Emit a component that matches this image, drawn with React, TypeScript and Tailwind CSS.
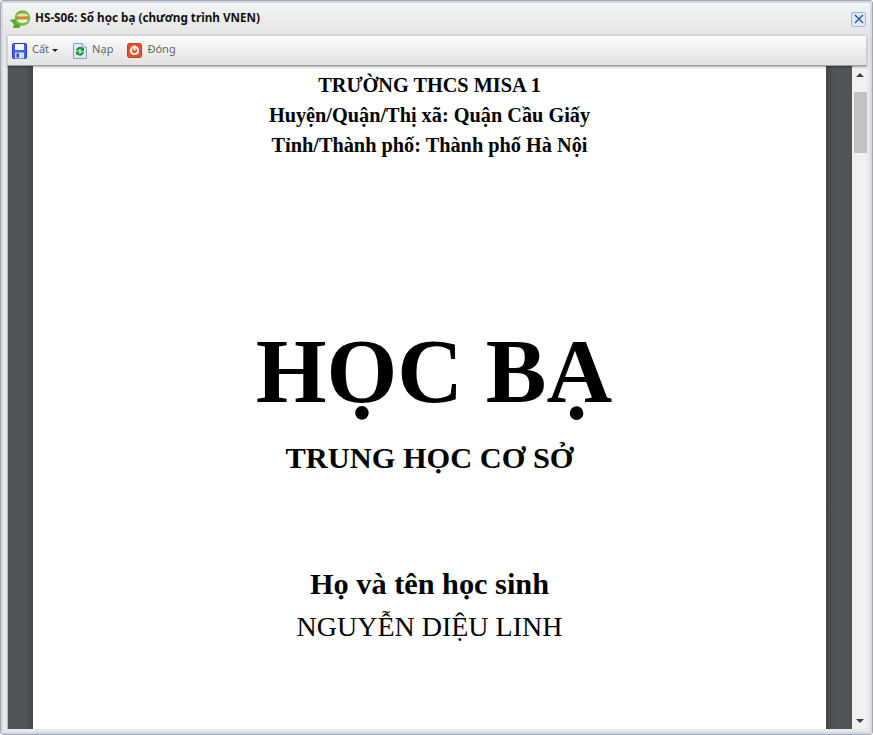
import React from 'react';

const AppIcon = () => (
  <svg width="22" height="19" viewBox="0 0 22 19" className="shrink-0">
    <path d="M6 6 L6 9 L0.5 10 L5 14 L4 18 L10 18 L13 14 Z" fill="#58a92c" />
    <circle cx="13.5" cy="8" r="7.8" fill="#74bd45" />
    <ellipse cx="13.5" cy="5.5" rx="5.5" ry="2" fill="#fbd9a8" />
    <rect x="8" y="6.5" width="11" height="2.2" fill="#ea7a2c" />
    <path d="M8 9.5 h11 a5.5 3.5 0 0 1 -11 0 Z" fill="#fdeccd" />
  </svg>
);

const SaveIcon = () => (
  <svg width="15" height="16" viewBox="0 0 15 16" className="shrink-0">
    <rect x="0.5" y="0.5" width="14" height="15" rx="1" fill="#3d63ea" stroke="#2338c4" />
    <rect x="3" y="1" width="9" height="6" fill="#f4f6fd" />
    <rect x="3" y="9.5" width="9" height="6" fill="#d9dfef" />
    <rect x="4.5" y="10.5" width="2.5" height="4" fill="#2f4db8" />
  </svg>
);

const ReloadIcon = () => (
  <svg width="14" height="16" viewBox="0 0 14 16" className="shrink-0">
    <path d="M0.5 0.5 H9.5 L13.5 4 V15.5 H0.5 Z" fill="#dfeaf6" stroke="#87a3c4" />
    <path d="M9.5 0.5 V4 H13.5" fill="#f6fafd" stroke="#87a3c4" />
    <path d="M3 7.5 A4 4 0 0 1 10 5.2 L11 4.2 V8.3 H7 L8.5 6.8 A2 2 0 0 0 5.2 7.8 Z" fill="#169a2e" />
    <path d="M11 9 A4 4 0 0 1 4 11.3 L3 12.3 V8.6 H7 L5.5 10 A2 2 0 0 0 8.8 9 Z" fill="#169a2e" />
  </svg>
);

const PowerIcon = () => (
  <svg width="15" height="15" viewBox="0 0 15 15" className="shrink-0">
    <rect x="0.5" y="0.5" width="14" height="14" rx="2" fill="#e4532b" stroke="#c63d1a" />
    <circle cx="7.5" cy="7.5" r="3.6" fill="none" stroke="#fff" strokeWidth="2" />
    <rect x="6.5" y="2.5" width="2" height="5" fill="#fff" />
  </svg>
);

const ToolbarButton = ({ icon, label, caret }: { icon: React.ReactNode; label: string; caret?: boolean }) => (
  <div className="flex items-center gap-[5px]">
    {icon}
    <span className="text-[11px] leading-[16px] -mt-[3px] text-[#666]">{label}</span>
    {caret && <span className="ml-[-2px] mr-[1px] w-0 h-0 border-x-[3px] border-x-transparent border-t-[3px] border-t-[#222]" />}
  </div>
);

export default function App() {
  return (
    <div
      className="w-[873px] h-[735px] overflow-hidden border border-[#a8a8a8] rounded-[3px]"
      style={{ fontFamily: '"Noto Sans", sans-serif' }}
    >
      <div className="h-full flex flex-col border-2 border-[#cfd9ea] bg-[#e8e8e8] pl-[4px] pb-[3px] pr-[3px]">
        {/* title bar */}
        <div className="h-[32px] shrink-0 flex items-center justify-between -ml-[4px] -mr-[3px] pl-[6px] pr-[4px] bg-gradient-to-b from-[#f4f4f4] to-[#e4e4e4]">
          <div className="flex items-center gap-[4px]">
            <AppIcon />
            <span className="text-[11.7px] font-bold text-[#111] -mt-[2px]">HS-S06: Sổ học bạ (chương trình VNEN)</span>
          </div>
          <div className="w-[15px] h-[15px] flex items-center justify-center bg-[#dfe9fb] border border-[#9db8e8] rounded-[2px]">
            <svg width="10" height="10" viewBox="0 0 10 10">
              <path d="M1 1 L9 9 M9 1 L1 9" stroke="#2f4f9e" strokeWidth="1.4" />
            </svg>
          </div>
        </div>

        {/* toolbar */}
        <div className="relative z-10 h-[31px] shrink-0 flex items-center pl-[4px] gap-[14px] bg-gradient-to-b from-[#fbfbfb] to-[#e2e2e2] border border-[#d4d4d4] border-b-[#9c9c9c] shadow-[0_1px_2px_rgba(0,0,0,0.35)]">
          <ToolbarButton icon={<SaveIcon />} label="Cất" caret />
          <ToolbarButton icon={<ReloadIcon />} label="Nạp" />
          <ToolbarButton icon={<PowerIcon />} label="Đóng" />
        </div>

        {/* document viewer */}
        <div className="flex-1 min-h-0 flex border-l border-[#b8b8b8]">
          <div className="w-[25px] shrink-0 bg-gradient-to-r from-[#505457] from-70% to-[#44474a]" />
          <div className="flex-1 min-w-0 bg-white text-black text-center overflow-hidden" style={{ fontFamily: '"Liberation Serif", serif' }}>
            <div className="pt-[4px] font-bold text-[20.3px] leading-[30px]">
              <div>TRƯỜNG THCS MISA 1</div>
              <div>Huyện/Quận/Thị xã: Quận Cầu Giấy</div>
              <div>Tỉnh/Thành phố: Thành phố Hà Nội</div>
            </div>
            <div className="mt-[160px] pl-[9px] font-bold text-[91px] leading-[104px]">HỌC BẠ</div>
            <div className="mt-[17px] font-bold text-[30.4px] leading-[35px]">TRUNG HỌC CƠ SỞ</div>
            <div className="mt-[91px] font-bold text-[30.3px] leading-[35px]">Họ và tên học sinh</div>
            <div className="mt-[9px] text-[28px] leading-[32px]">NGUYỄN DIỆU LINH</div>
          </div>
          <div className="w-[26px] shrink-0 bg-gradient-to-r from-[#44474a] to-[#505457] to-30%" />
          {/* scrollbar */}
          <div className="w-[15px] shrink-0 flex flex-col items-center bg-[#f0f0f0]">
            <div className="h-[17px] w-full flex items-center justify-center">
              <span className="w-0 h-0 border-x-[4px] border-x-transparent border-b-[4px] border-b-[#404040]" />
            </div>
            <div className="h-[61px] mt-[9px] w-[13px] self-end bg-[#c1c1c1]" />
            <div className="flex-1" />
            <div className="h-[17px] w-full flex items-center justify-center">
              <span className="w-0 h-0 border-x-[4px] border-x-transparent border-t-[4px] border-t-[#404040]" />
            </div>
          </div>
        </div>
      </div>
    </div>
  );
}
